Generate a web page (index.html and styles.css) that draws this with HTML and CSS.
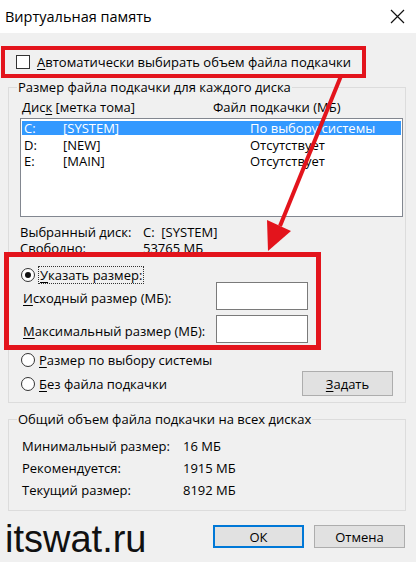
FILE: index.html
```html
<!DOCTYPE html>
<html>
<head>
	<meta charset="utf-8">
	<title>Виртуальная память</title>
	<link rel="stylesheet" href="styles.css">
</head>
<body>

<div class="titlebar">
	<span class="title">Виртуальная память</span>
	<svg class="close" width="15" height="15" viewBox="0 0 15 15">
		<path d="M1 1 L14 14 M14 1 L1 14" stroke="#111" stroke-width="1.2" fill="none"/>
	</svg>
</div>

<div class="auto">
	<span class="checkbox"></span>
	<span><u>А</u>втоматически выбирать объем файла подкачки</span>
</div>

<fieldset class="group group-disks">
	<legend>Размер файла подкачки для каждого диска</legend>

	<div class="list-head">
		<span class="head-disk">Дис<u>к</u> [метка тома]</span>
		<span>Файл подкачки (МБ)</span>
	</div>

	<div class="listbox">
		<div class="row selected">
			<span class="col-letter">C:</span>
			<span class="col-label">[SYSTEM]</span>
			<span>По выбору системы</span>
		</div>
		<div class="row">
			<span class="col-letter">D:</span>
			<span class="col-label">[NEW]</span>
			<span>Отсутствует</span>
		</div>
		<div class="row">
			<span class="col-letter">E:</span>
			<span class="col-label">[MAIN]</span>
			<span>Отсутствует</span>
		</div>
	</div>

	<div class="info-line info-first">
		<span class="info-name">Выбранный диск:</span>
		<span>C:&nbsp;&nbsp;[SYSTEM]</span>
	</div>
	<div class="info-line">
		<span class="info-name">Свободно:</span>
		<span>53765 МБ</span>
	</div>

	<div class="radio-line radio-custom">
		<span class="radio checked"></span>
		<span class="focus"><u>У</u>казать размер:</span>
	</div>
	<div class="size-line size-first">
		<span class="size-name"><u>И</u>сходный размер (МБ):</span>
		<span class="field"></span>
	</div>
	<div class="size-line">
		<span class="size-name"><u>М</u>аксимальный размер (МБ):</span>
		<span class="field"></span>
	</div>

	<div class="radio-line radio-system">
		<span class="radio"></span>
		<span><u>Р</u>азмер по выбору системы</span>
	</div>
	<div class="radio-line radio-none">
		<span class="radio"></span>
		<span class="grow"><u>Б</u>ез файла подкачки</span>
		<button class="btn btn-set"><u>З</u>адать</button>
	</div>
</fieldset>

<fieldset class="group group-total">
	<legend>Общий объем файла подкачки на всех дисках</legend>
	<div class="total-line total-first">
		<span class="total-name">Минимальный размер:</span>
		<span>16 МБ</span>
	</div>
	<div class="total-line">
		<span class="total-name">Рекомендуется:</span>
		<span>1915 МБ</span>
	</div>
	<div class="total-line">
		<span class="total-name">Текущий размер:</span>
		<span>8192 МБ</span>
	</div>
</fieldset>

<div class="footer">
	<span class="watermark">itswat.ru</span>
	<button class="btn btn-ok">ОК</button>
	<button class="btn">Отмена</button>
</div>

<!-- red annotations over the dialog -->
<div class="mark mark-auto"></div>
<div class="mark mark-custom"></div>
<svg class="arrow" width="416" height="562" viewBox="0 0 416 562">
	<line x1="341" y1="76" x2="280" y2="226" stroke="#e3141c" stroke-width="4"/>
	<polygon points="268,251 267,220 291,231" fill="#e3141c"/>
</svg>

</body>
</html>
```

FILE: styles.css
```css
body {
	margin: 0;
	width: 416px;
	height: 562px;
	overflow: hidden;
	position: relative;
	background: #f0f0f0;
	color: #000;
	font-family: "Open Sans", "Noto Sans", sans-serif;
	font-size: 13px;
	line-height: 16px;
}
u { text-decoration-thickness: 1px; text-underline-offset: 2px; }

.titlebar {
	height: 33px;
	background: #fff;
	display: flex;
	align-items: center;
	justify-content: space-between;
	padding: 0 11px 0 5px;
	font-size: 14.5px;
}

.auto {
	display: flex;
	align-items: center;
	margin-top: 21px;
	padding-left: 16px;
	height: 16px;
}
.checkbox {
	width: 12px;
	height: 12px;
	border: 1px solid #333;
	background: #fff;
	margin-right: 7px;
}

/* --------------- */

.group {
	margin: 0 10px 0 8px;
	padding: 0 2px 0 11px;
	border: 1px solid #dcdcdc;
	min-width: 0;
}
.group legend {
	padding: 0 1px;
	margin-left: -3px;
	line-height: 16px;
}
.group-disks {
	margin-top: 9px;
	padding-bottom: 6px;
}

.list-head {
	display: flex;
	margin-top: 4px;
	padding-left: 2px;
}
.head-disk { width: 191px; }

.listbox {
	margin-top: 3px;
	height: 97px;
	background: #fff;
	border: 1px solid #828790;
	padding-top: 2px;
	box-sizing: border-box;
	height: 99px;
}
.row {
	display: flex;
	margin: 0 1px 2.5px 1px;
	padding-left: 2px;
	line-height: 14px;
}
.row.selected {
	background: #3399ff;
	color: #fff;
}
.col-letter { width: 39px; }
.col-label { width: 187px; }

.info-line { display: flex; }
.info-first { margin-top: 7px; }
.info-name { width: 123px; }

.radio-line {
	display: flex;
	align-items: center;
	padding-left: 1px;
}
.radio {
	width: 12px;
	height: 12px;
	border: 1px solid #333;
	border-radius: 50%;
	background: #fff;
	margin-right: 4px;
	position: relative;
	flex: none;
}
.radio.checked::after {
	content: "";
	position: absolute;
	left: 3px;
	top: 3px;
	width: 6px;
	height: 6px;
	border-radius: 50%;
	background: #111;
}
.focus {
	outline: 1px dotted #333;
	outline-offset: 0;
	padding: 0 1px;
}
.radio-custom { margin-top: 11px; }
.radio-system { margin-top: 9px; }
.radio-none { margin-top: 3px; }
.grow { flex: 1; }

.size-line {
	display: flex;
	align-items: center;
	padding-left: 3px;
	height: 28px;
}
.size-first { margin-top: -1px; }
.size-line + .size-line { margin-top: 5px; }
.size-name { width: 193px; padding-top: 3px; }
.field {
	width: 90px;
	height: 26px;
	border: 1px solid #7a7a7a;
	background: #fff;
}

.btn {
	height: 25px;
	border: 1px solid #adadad;
	background: #e1e1e1;
	font: inherit;
	color: #000;
	padding: 0;
}
.btn-set {
	width: 91px;
	margin-right: 10px;
}

/* --------------- */

.group-total {
	margin-top: 8px;
	padding-bottom: 12px;
}
.total-line {
	display: flex;
	padding-left: 2px;
}
.total-first { margin-top: 11px; }
.total-line + .total-line { margin-top: 6px; }
.total-name { width: 161px; }

.footer {
	display: flex;
	align-items: flex-start;
	margin-top: 14px;
	padding: 0 11px 0 5px;
	gap: 10px;
}
.footer .btn {
	width: 91px;
	height: 23px;
}
.btn-ok {
	border-color: #0078d7;
	box-shadow: inset 0 0 0 1px #0078d7;
}
.watermark {
	flex: 1;
	margin-top: -5px;
	font-family: "Liberation Sans", Arial, sans-serif;
	font-size: 38px;
	line-height: 38px;
	color: #111;
}

/* ---------------- */

.mark {
	position: absolute;
	border: 4px solid #e3141c;
	box-sizing: border-box;
}
.mark-auto {
	left: 1px;
	top: 46px;
	width: 365px;
	height: 32px;
}
.mark-custom {
	left: 4px;
	top: 252px;
	width: 317px;
	height: 98px;
	border-width: 5px;
}
.arrow {
	position: absolute;
	left: 0;
	top: 0;
}
```
